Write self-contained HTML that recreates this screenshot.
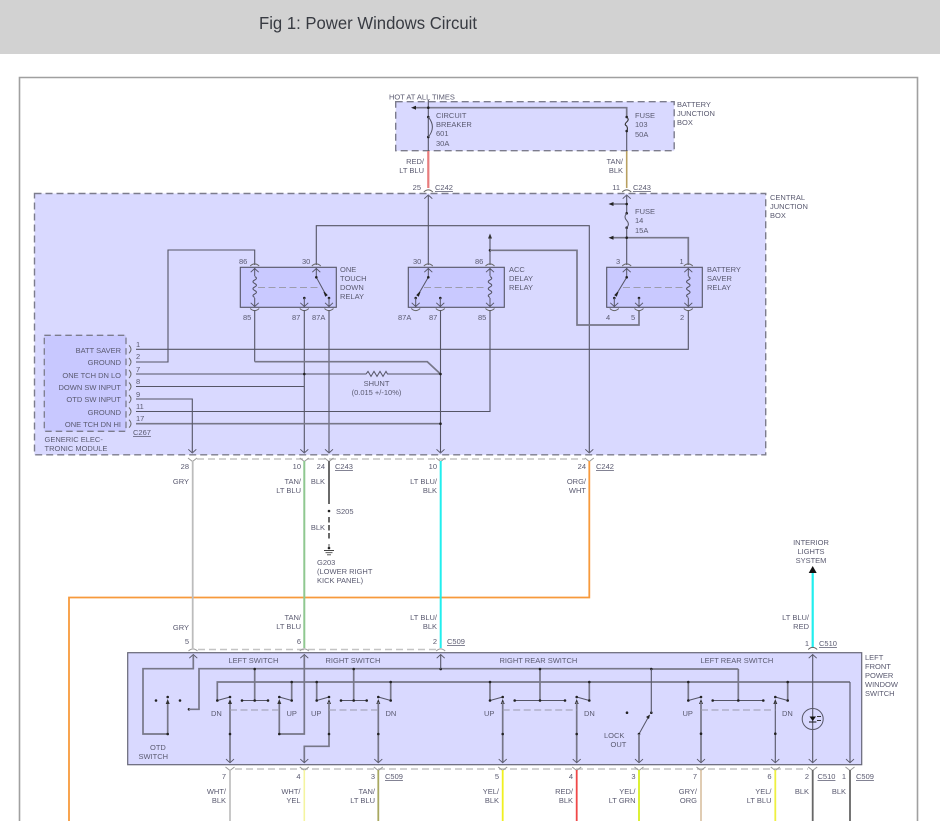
<!DOCTYPE html>
<html><head><meta charset="utf-8"><style>
html,body{margin:0;padding:0;background:#fff;width:940px;height:826px;overflow:hidden}
svg{display:block;position:absolute;left:0;top:0}
text{font-family:"Liberation Sans",Arial,sans-serif;font-size:7.5px;fill:#5a5a70}
.e{text-anchor:end}.m{text-anchor:middle}
.u{text-decoration:underline}
.w{fill:none;stroke:#555566;stroke-width:1.1}
.b{fill:none;stroke:#777788;stroke-width:1.7}
.t{fill:none;stroke:#555566;stroke-width:1}
.ds{fill:none;stroke:#c4c4c4;stroke-width:1.4;stroke-dasharray:7 4}
.ld{fill:none;stroke:#9c9cac;stroke-width:1.1;stroke-dasharray:7 3.5}
.soft{filter:blur(.22px)}
</style></head><body>
<svg width="940" height="826" viewBox="0 0 940 826" xmlns="http://www.w3.org/2000/svg">
<defs>
<g id="d"><circle r="1.3" fill="#222"/></g>
<g id="up"><path d="M-4 3.2 L0 -0.5 L4 3.2" fill="none" stroke="#555566" stroke-width="0.9"/></g>
<g id="dn"><path d="M-4 -3.2 L0 0.5 L4 -3.2" fill="none" stroke="#555566" stroke-width="0.9"/></g>
<g id="at"><path d="M-4.5 2 Q0 -2.2 4.5 2" fill="none" stroke="#666" stroke-width="0.9"/></g>
<g id="ab"><path d="M-4.5 -2 Q0 2.2 4.5 -2" fill="none" stroke="#666" stroke-width="0.9"/></g>
<g id="vg"><path d="M-4.5 -2 L0 1.5 L4.5 -2" fill="none" stroke="#999" stroke-width="1"/></g>
<g id="ag"><path d="M-4.5 2 Q0 -2.2 4.5 2" fill="none" stroke="#999" stroke-width="1"/></g>
<g id="tu"><path d="M0 -3 L2 2 L-2 2 Z" fill="#333"/></g>
<g id="tl"><path d="M-3 0 L2 -2 L2 2 Z" fill="#222"/></g>
<g id="coil"><path d="M0 -10.5 q3.5 1.75 0 3.5 q-3.5 1.75 0 3.5 q3.5 1.75 0 3.5 q-3.5 1.75 0 3.5 q3.5 1.75 0 3.5 q-3.5 1.75 0 3.5" fill="none" stroke="#555566" stroke-width="1"/></g>
</defs>

<rect x="0" y="0" width="940" height="54" fill="#d2d2d2"/>
<text x="259" y="29" style="font-size:17.2px;fill:#383b42" textLength="218" lengthAdjust="spacingAndGlyphs">Fig 1: Power Windows Circuit</text>

<path d="M19.5 821V77.5H917.5V821" fill="none" stroke="#a0a0a0" stroke-width="1.6"/>

<g class="soft">
<rect x="395.7" y="101.7" width="278.5" height="49" fill="#d9d9ff" stroke="#7c7c8c" stroke-width="1.4" stroke-dasharray="7 4"/>
<rect x="34.5" y="193.5" width="731.2" height="261.3" fill="#d9d9ff" stroke="#7c7c8c" stroke-width="1.4" stroke-dasharray="7 4"/>
<rect x="44.3" y="335.3" width="81.7" height="96" fill="#c8c8ff" stroke="#7c7c8c" stroke-width="1.3" stroke-dasharray="6.5 4"/>

<!-- battery junction -->
<path class="w" d="M428.3 100V151"/>
<path class="b" d="M415 107.7H626.7V117"/>
<path class="w" d="M626.7 131V151"/>
<use href="#tl" x="414" y="107.7"/>
<use href="#d" x="428.3" y="107.7"/>
<use href="#d" x="428.3" y="117"/><use href="#d" x="428.3" y="137"/>
<path class="t" d="M428.3 117Q436.5 127 428.3 137"/>
<use href="#d" x="626.7" y="117"/><use href="#d" x="626.7" y="131"/>
<path d="M626.7 117q3 2.5 0 5t0 4q1.5 3 0 5" fill="none" stroke="#333" stroke-width="1.1"/>
<path d="M428.3 151V188" stroke="#e87c7c" stroke-width="2.2"/>
<path d="M626.7 151V188" stroke="#b8a060" stroke-width="1.6"/>
<use href="#at" x="428.3" y="190"/><use href="#at" x="626.7" y="190"/>
<use href="#up" x="428.3" y="195.5"/><use href="#up" x="626.7" y="195.5"/>

<!-- central internals -->
<path class="w" d="M428.3 196V265"/>
<path class="w" d="M316.3 265V225.7H589.3V452"/>
<path class="w" d="M626.7 196V213.3"/>
<path class="w" d="M613 204H626.7"/>
<use href="#tl" x="611.5" y="204"/><use href="#d" x="626.7" y="204"/>
<use href="#d" x="626.7" y="213.3"/><use href="#d" x="626.7" y="227.7"/>
<path class="t" d="M626.7 213.3q-3.4 3.6 0 7.2t0 7.2"/>
<path class="w" d="M626.7 227.7V265"/>
<path class="b" d="M613 237.7H688.3V265"/>
<use href="#tl" x="611.5" y="237.7"/><use href="#d" x="626.7" y="237.7"/>
<path class="w" d="M254.7 265V250H168V362H136"/>
<path class="w" d="M490 238V265"/>
<use href="#tu" x="490" y="236.5"/>
<use href="#d" x="490" y="250.3"/>
<path class="b" d="M490 250.3H577V325H639V310"/>
<path class="w" d="M688.3 310V349.3H136"/>

<!-- relays -->
<rect x="240.3" y="267.3" width="96" height="40" fill="#c9c9ff" stroke="#555566" stroke-width="1.1"/>
<rect x="408.3" y="267.3" width="96" height="40" fill="#c9c9ff" stroke="#555566" stroke-width="1.1"/>
<rect x="606.7" y="267.3" width="95.6" height="40" fill="#c9c9ff" stroke="#555566" stroke-width="1.1"/>

<!-- One touch -->
<path class="ld" d="M258 287.5H320"/>
<path class="t" d="M254.7 268V276M254.7 298V306"/>
<use href="#coil" x="254.7" y="287"/>
<use href="#up" x="254.7" y="269"/><use href="#dn" x="254.7" y="306"/>
<path class="t" d="M316.3 268V277.3L326 295"/>
<use href="#up" x="316.3" y="269"/><use href="#d" x="316.3" y="277.3"/>
<path d="M324 292L327 295L325.5 296Z" fill="#222" stroke="#222"/>
<use href="#d" x="329" y="298"/><path class="t" d="M329 298V307"/><use href="#dn" x="329" y="306"/>
<use href="#d" x="304.3" y="298"/><path class="t" d="M304.3 298V307"/><use href="#dn" x="304.3" y="306"/>
<use href="#at" x="254.7" y="264"/><use href="#at" x="316.3" y="264"/>
<use href="#ab" x="254.7" y="310.5"/><use href="#ab" x="304.3" y="310.5"/><use href="#ab" x="329" y="310.5"/>

<!-- ACC -->
<path class="ld" d="M424 287.5H486"/>
<path class="t" d="M490 268V276M490 298V306"/>
<use href="#coil" x="490" y="287"/>
<use href="#up" x="490" y="269"/><use href="#dn" x="490" y="306"/>
<path class="t" d="M428.3 268V277.3L418 295"/>
<use href="#up" x="428.3" y="269"/><use href="#d" x="428.3" y="277.3"/>
<path d="M420 292L417 295L418.5 296Z" fill="#222" stroke="#222"/>
<use href="#d" x="415.7" y="298"/><path class="t" d="M415.7 298V307"/><use href="#dn" x="415.7" y="306"/>
<use href="#d" x="440.3" y="298"/><path class="t" d="M440.3 298V307"/><use href="#dn" x="440.3" y="306"/>
<use href="#at" x="428.3" y="264"/><use href="#at" x="490" y="264"/>
<use href="#ab" x="415.7" y="310.5"/><use href="#ab" x="440.3" y="310.5"/><use href="#ab" x="490" y="310.5"/>

<!-- Battery saver -->
<path class="ld" d="M623 287.5H685"/>
<path class="t" d="M688.3 268V276M688.3 298V306"/>
<use href="#coil" x="688.3" y="287"/>
<use href="#up" x="688.3" y="269"/><use href="#dn" x="688.3" y="306"/>
<path class="t" d="M626.7 268V277.3L616 295"/>
<use href="#up" x="626.7" y="269"/><use href="#d" x="626.7" y="277.3"/>
<path d="M618 292L615 295L616.5 296Z" fill="#222" stroke="#222"/>
<use href="#d" x="614.3" y="298"/><path class="t" d="M614.3 298V307"/><use href="#dn" x="614.3" y="306"/>
<use href="#d" x="639" y="298"/><path class="t" d="M639 298V307"/><use href="#dn" x="639" y="306"/>
<use href="#at" x="626.7" y="264"/><use href="#at" x="688.3" y="264"/>
<use href="#ab" x="614.3" y="310.5"/><use href="#ab" x="639" y="310.5"/><use href="#ab" x="688.3" y="310.5"/>

<!-- central lower wires -->
<path class="w" d="M304.3 310V452"/>
<path class="w" d="M329 310V452"/>
<path class="w" d="M440.5 310V452"/>
<path class="w" d="M490 310V411.5H136"/>
<path class="w" d="M254.7 310V361.7"/>
<path class="b" d="M254.7 361.7H427.3L440.5 374"/>
<path class="t" d="M136 374H366l2-2.6 3 5 3-5 3 5 3-5 3 5 3-5 1.5 2.6H440.5"/>
<path class="b" d="M136 423.7H440.5"/>
<path class="w" d="M136 386.5H304.3"/>
<path class="w" d="M136 399H192.3V452"/>
<use href="#d" x="304.3" y="374"/><use href="#d" x="440.5" y="374"/><use href="#d" x="440.5" y="423.7"/>
<use href="#dn" x="192.3" y="452.5"/><use href="#dn" x="304.3" y="452.5"/><use href="#dn" x="329" y="452.5"/><use href="#dn" x="440.5" y="452.5"/><use href="#dn" x="589.3" y="452.5"/>
<g fill="none" stroke="#666" stroke-width="0.9">
<path d="M129 345.3Q133 349.3 129 353.3M129 358Q133 362 129 366M129 370Q133 374 129 378M129 382.5Q133 386.5 129 390.5M129 395Q133 399 129 403M129 407.5Q133 411.5 129 415.5M129 419.7Q133 423.7 129 427.7"/>
</g>

<!-- between boxes -->
<path class="ds" d="M197 459H585"/>
<use href="#vg" x="192.5" y="460"/><use href="#vg" x="304.3" y="460"/><use href="#vg" x="329" y="460"/><use href="#vg" x="440.7" y="460"/><use href="#vg" x="589.3" y="460"/>
<path d="M589.3 461V597.5H69V821" fill="none" stroke="#f79a3c" stroke-width="1.8"/>
<path d="M192.7 461V648" stroke="#bcbcbc" stroke-width="1.8"/>
<path d="M304.3 461V648" stroke="#8fc890" stroke-width="2"/>
<path d="M440.7 461V648" stroke="#22eeee" stroke-width="2"/>
<path d="M329 461V504" stroke="#6a6a6a" stroke-width="2"/>
<path d="M329 517V541" stroke="#6a6a6a" stroke-width="2" stroke-dasharray="5.5 2.5"/>
<use href="#d" x="329" y="511"/><use href="#d" x="329" y="548"/>
<path d="M329 544V548M324 550.5H334M325.5 552.7H332.5M327 554.8H331" stroke="#444" stroke-width="0.9" fill="none"/>
<path class="ds" d="M198 649.5H436"/>
<use href="#ag" x="193" y="649"/><use href="#ag" x="304.3" y="649"/><use href="#ag" x="440.7" y="649"/>
<path d="M812.7 572V648" stroke="#22eeee" stroke-width="2.2"/>
<path d="M812.7 566L816.7 573H808.7Z" fill="#111"/>
<use href="#at" x="812.7" y="647.5"/>

<!-- Lower module -->
<rect x="127.7" y="652.7" width="734" height="112" fill="#d9d9ff" stroke="#666677" stroke-width="1.2"/>
<use href="#up" x="193.3" y="655"/><use href="#up" x="304.3" y="655"/><use href="#up" x="440.7" y="655"/><use href="#up" x="812.7" y="655"/>
<path class="b" d="M193.3 655V668.7H143V734H167.7V702"/>
<use href="#d" x="167.7" y="734"/>
<use href="#tu" x="167.7" y="702"/><use href="#d" x="167.7" y="697"/>
<use href="#d" x="156" y="700.5"/><use href="#d" x="180" y="700.5"/>
<use href="#d" x="189" y="709.3"/>
<path class="b" d="M189 709.3H199V668.7H651.3"/>
<path class="b" d="M651.3 669H738.3"/>
<use href="#d" x="651.3" y="669"/><use href="#d" x="440.7" y="669"/>
<path class="w" d="M440.7 655V669"/>
<path class="b" d="M217.3 700.5V682H850"/>
<path class="w" d="M850 682V762"/>

<!-- left switch -->
<path class="t" d="M217.3 700.5L230 697"/>
<path class="b" d="M230 702V762"/>
<use href="#d" x="217.3" y="700.5"/><use href="#d" x="230" y="697"/><use href="#tu" x="230" y="702"/><use href="#d" x="230" y="734"/>
<path class="t" d="M242 700.5H268"/><path class="b" d="M254.7 700.5V669"/>
<use href="#d" x="242" y="700.5"/><use href="#d" x="254.7" y="700.5"/><use href="#d" x="268" y="700.5"/><use href="#d" x="254.7" y="669"/>
<path class="t" d="M279.3 697L291.7 700.5"/><path class="b" d="M291.7 700.5V682"/>
<use href="#d" x="279.3" y="697"/><use href="#d" x="291.7" y="700.5"/><use href="#d" x="291.7" y="682"/>
<path class="b" d="M279.3 702V734H304.3V655"/>
<use href="#tu" x="279.3" y="702"/><use href="#d" x="279.3" y="734"/>
<path class="ld" d="M230 710H279.3"/>

<!-- right switch -->
<path class="b" d="M316.7 682V700.5"/><path class="t" d="M316.7 700.5L329 697"/>
<use href="#d" x="316.7" y="682"/><use href="#d" x="316.7" y="700.5"/><use href="#d" x="329" y="697"/><use href="#tu" x="329" y="702"/>
<path class="b" d="M329 702V746.3H304.3V762"/><use href="#d" x="329" y="734"/>
<path class="t" d="M341 700.5H366.7"/><path class="b" d="M353.7 700.5V669"/>
<use href="#d" x="341" y="700.5"/><use href="#d" x="353.7" y="700.5"/><use href="#d" x="366.7" y="700.5"/><use href="#d" x="353.7" y="669"/>
<path class="t" d="M378.3 697L390.7 700.5"/><path class="b" d="M390.7 700.5V682"/>
<use href="#d" x="378.3" y="697"/><use href="#d" x="390.7" y="700.5"/><use href="#d" x="390.7" y="682"/><use href="#tu" x="378.3" y="702"/>
<path class="b" d="M378.3 702V762"/><use href="#d" x="378.3" y="734"/>
<path class="ld" d="M329 710H378.3"/>

<!-- right rear -->
<path class="b" d="M490 682V700.5"/><path class="t" d="M490 700.5L502.7 697"/>
<use href="#d" x="490" y="682"/><use href="#d" x="490" y="700.5"/><use href="#d" x="502.7" y="697"/><use href="#tu" x="502.7" y="702"/>
<path class="b" d="M502.7 702V762"/><use href="#d" x="502.7" y="734"/>
<path class="t" d="M514.7 700.5H565"/><path class="b" d="M540 700.5V669"/>
<use href="#d" x="514.7" y="700.5"/><use href="#d" x="540" y="700.5"/><use href="#d" x="565" y="700.5"/><use href="#d" x="540" y="669"/>
<path class="t" d="M576.7 697L589.3 700.5"/><path class="b" d="M589.3 700.5V682"/>
<use href="#d" x="576.7" y="697"/><use href="#d" x="589.3" y="700.5"/><use href="#d" x="589.3" y="682"/><use href="#tu" x="576.7" y="702"/>
<path class="b" d="M576.7 702V762"/><use href="#d" x="576.7" y="734"/>
<path class="ld" d="M502.7 710H576.7"/>

<!-- lock -->
<use href="#d" x="627" y="712.7"/><use href="#d" x="651.3" y="712.7"/>
<path class="w" d="M651.3 712.7V669"/>
<path class="t" d="M639 734L649 716"/><path d="M650 714.5L649 719L646 717Z" fill="#222"/>
<use href="#d" x="639" y="734"/><path class="b" d="M639 734V762"/>

<!-- left rear -->
<path class="b" d="M688.3 682V700.5"/><path class="t" d="M688.3 700.5L701 697"/>
<use href="#d" x="688.3" y="682"/><use href="#d" x="688.3" y="700.5"/><use href="#d" x="701" y="697"/><use href="#tu" x="701" y="702"/>
<path class="b" d="M701 702V762"/><use href="#d" x="701" y="733.7"/>
<path class="t" d="M712.7 700.5H763.3"/><path class="b" d="M738.3 700.5V669"/>
<use href="#d" x="712.7" y="700.5"/><use href="#d" x="738.3" y="700.5"/><use href="#d" x="763.3" y="700.5"/>
<path class="t" d="M775.3 697L787.7 700.5"/><path class="b" d="M787.7 700.5V682"/>
<use href="#d" x="775.3" y="697"/><use href="#d" x="787.7" y="700.5"/><use href="#d" x="787.7" y="682"/><use href="#tu" x="775.3" y="702"/>
<path class="w" d="M775.3 702V762"/><use href="#d" x="775.3" y="733.7"/>
<path class="ld" d="M701 710H775.3"/>

<!-- LED -->
<path class="w" d="M812.7 655V762"/>
<circle cx="812.7" cy="719" r="10.5" fill="none" stroke="#555566" stroke-width="1"/>
<path d="M809.5 716.5H816L812.7 721Z" fill="#111"/><path d="M809 722H816.4" stroke="#111" stroke-width="1"/>
<path d="M817 716.5H821M817 720.5H821" stroke="#333" stroke-width="1.1"/>

<!-- bottom arrows -->
<g>
<use href="#dn" x="230" y="762.3"/><use href="#dn" x="304.3" y="762.3"/><use href="#dn" x="378.3" y="762.3"/><use href="#dn" x="502.7" y="762.3"/><use href="#dn" x="576.7" y="762.3"/><use href="#dn" x="639" y="762.3"/><use href="#dn" x="701" y="762.3"/><use href="#dn" x="775.3" y="762.3"/><use href="#dn" x="812.7" y="762.3"/><use href="#dn" x="850" y="762.3"/>
</g>
<path class="ds" d="M235 769H808"/>
<g>
<use href="#vg" x="230" y="769"/><use href="#vg" x="304.3" y="769"/><use href="#vg" x="378.3" y="769"/><use href="#vg" x="502.7" y="769"/><use href="#vg" x="576.7" y="769"/><use href="#vg" x="639" y="769"/><use href="#vg" x="701" y="769"/><use href="#vg" x="775.3" y="769"/><use href="#vg" x="812.7" y="769"/><use href="#vg" x="850" y="769"/>
</g>
<path d="M230 770V821" stroke="#bbb" stroke-width="1.6"/>
<path d="M304.3 770V821" stroke="#f4f4a0" stroke-width="1.6"/>
<path d="M378.3 770V821" stroke="#a8a860" stroke-width="1.8"/>
<path d="M502.7 770V821" stroke="#f0f020" stroke-width="1.8"/>
<path d="M576.7 770V821" stroke="#f04848" stroke-width="1.8"/>
<path d="M639 770V821" stroke="#d8ee20" stroke-width="1.8"/>
<path d="M701 770V821" stroke="#d8c0a0" stroke-width="1.6"/>
<path d="M775.3 770V821" stroke="#eef040" stroke-width="1.8"/>
<path d="M812.7 770V821" stroke="#666" stroke-width="1.8"/>
<path d="M850 770V821" stroke="#666" stroke-width="1.8"/>

<!-- TEXT -->
<text x="389" y="99.5">HOT AT ALL TIMES</text>
<text x="436" y="118">CIRCUIT</text><text x="436" y="127">BREAKER</text><text x="436" y="136">601</text><text x="436" y="146">30A</text>
<text x="635" y="118">FUSE</text><text x="635" y="127">103</text><text x="635" y="137">50A</text>
<text x="677" y="107">BATTERY</text><text x="677" y="116">JUNCTION</text><text x="677" y="125">BOX</text>
<text class="e" x="424" y="164">RED/</text><text class="e" x="424" y="173">LT BLU</text>
<text class="e" x="623" y="164">TAN/</text><text class="e" x="623" y="173">BLK</text>
<text class="e" x="421" y="190">25</text><text class="u" x="435" y="190">C242</text>
<text class="e" x="620" y="190">11</text><text class="u" x="633" y="190">C243</text>
<text x="770" y="200">CENTRAL</text><text x="770" y="209">JUNCTION</text><text x="770" y="218">BOX</text>
<text x="635" y="214">FUSE</text><text x="635" y="223">14</text><text x="635" y="233">15A</text>

<text x="239" y="264">86</text><text x="302" y="264">30</text><text x="413" y="264">30</text><text x="475" y="264">86</text>
<text x="616" y="264">3</text><text x="679.5" y="264">1</text>
<text x="243" y="320">85</text><text x="292" y="320">87</text><text x="312" y="320">87A</text>
<text x="398" y="320">87A</text><text x="429" y="320">87</text><text x="478" y="320">85</text>
<text x="606" y="320">4</text><text x="631" y="320">5</text><text x="680" y="320">2</text>
<text x="340" y="272">ONE</text><text x="340" y="281">TOUCH</text><text x="340" y="290">DOWN</text><text x="340" y="299">RELAY</text>
<text x="509" y="272">ACC</text><text x="509" y="281">DELAY</text><text x="509" y="290">RELAY</text>
<text x="707" y="272">BATTERY</text><text x="707" y="281">SAVER</text><text x="707" y="290">RELAY</text>

<text class="e" x="121" y="353">BATT SAVER</text><text class="e" x="121" y="365">GROUND</text><text class="e" x="121" y="378">ONE TCH DN LO</text><text class="e" x="121" y="390">DOWN SW INPUT</text><text class="e" x="121" y="402">OTD SW INPUT</text><text class="e" x="121" y="415">GROUND</text><text class="e" x="121" y="427">ONE TCH DN HI</text>
<text x="136" y="347">1</text><text x="136" y="359">2</text><text x="136" y="372">7</text><text x="136" y="384">8</text><text x="136" y="397">9</text><text x="136" y="409">11</text><text x="136" y="421">17</text>
<text class="u" x="133" y="435">C267</text>
<text x="44.5" y="442">GENERIC ELEC-</text><text x="44.5" y="451">TRONIC MODULE</text>
<text class="m" x="376.5" y="386">SHUNT</text><text class="m" x="376.5" y="395">(0.015 +/-10%)</text>

<text class="e" x="189" y="469">28</text><text class="e" x="189" y="484">GRY</text>
<text class="e" x="301" y="469">10</text><text class="e" x="301" y="484">TAN/</text><text class="e" x="301" y="493">LT BLU</text>
<text class="e" x="325" y="469">24</text><text class="e" x="325" y="484">BLK</text><text class="u" x="335" y="469">C243</text>
<text x="336" y="514">S205</text><text class="e" x="325" y="530">BLK</text>
<text x="317" y="565">G203</text><text x="317" y="574">(LOWER RIGHT</text><text x="317" y="583">KICK PANEL)</text>
<text class="e" x="437" y="469">10</text><text class="e" x="437" y="484">LT BLU/</text><text class="e" x="437" y="493">BLK</text>
<text class="e" x="586" y="469">24</text><text class="e" x="586" y="484">ORG/</text><text class="e" x="586" y="493">WHT</text><text class="u" x="596" y="469">C242</text>

<text class="e" x="189" y="630">GRY</text><text class="e" x="189" y="644">5</text>
<text class="e" x="301" y="620">TAN/</text><text class="e" x="301" y="629">LT BLU</text><text class="e" x="301" y="644">6</text>
<text class="e" x="437" y="620">LT BLU/</text><text class="e" x="437" y="629">BLK</text><text class="e" x="437" y="644">2</text><text class="u" x="447" y="644">C509</text>
<text class="m" x="811" y="545">INTERIOR</text><text class="m" x="811" y="554">LIGHTS</text><text class="m" x="811" y="563">SYSTEM</text>
<text class="e" x="809" y="620">LT BLU/</text><text class="e" x="809" y="629">RED</text><text class="e" x="809" y="646">1</text><text class="u" x="819" y="646">C510</text>
<text x="865" y="660">LEFT</text><text x="865" y="669">FRONT</text><text x="865" y="678">POWER</text><text x="865" y="687">WINDOW</text><text x="865" y="696">SWITCH</text>

<text x="228.5" y="663">LEFT SWITCH</text><text x="325.5" y="663">RIGHT SWITCH</text><text x="499.5" y="663">RIGHT REAR SWITCH</text><text x="700.5" y="663">LEFT REAR SWITCH</text>
<text x="211" y="716">DN</text><text x="286.5" y="716">UP</text><text x="311" y="716">UP</text><text x="385.5" y="716">DN</text>
<text x="484" y="716">UP</text><text x="584" y="716">DN</text><text x="682.5" y="716">UP</text><text x="782" y="716">DN</text>
<text x="604" y="738">LOCK</text><text x="610.5" y="747">OUT</text>
<text x="150" y="750">OTD</text><text x="138.5" y="759">SWITCH</text>

<text class="e" x="226" y="779">7</text><text class="e" x="226" y="794">WHT/</text><text class="e" x="226" y="803">BLK</text>
<text class="e" x="300.5" y="779">4</text><text class="e" x="300.5" y="794">WHT/</text><text class="e" x="300.5" y="803">YEL</text>
<text class="e" x="375" y="779">3</text><text class="e" x="375" y="794">TAN/</text><text class="e" x="375" y="803">LT BLU</text><text class="u" x="385" y="779">C509</text>
<text class="e" x="499" y="779">5</text><text class="e" x="499" y="794">YEL/</text><text class="e" x="499" y="803">BLK</text>
<text class="e" x="573" y="779">4</text><text class="e" x="573" y="794">RED/</text><text class="e" x="573" y="803">BLK</text>
<text class="e" x="635.5" y="779">3</text><text class="e" x="635.5" y="794">YEL/</text><text class="e" x="635.5" y="803">LT GRN</text>
<text class="e" x="697" y="779">7</text><text class="e" x="697" y="794">GRY/</text><text class="e" x="697" y="803">ORG</text>
<text class="e" x="771.5" y="779">6</text><text class="e" x="771.5" y="794">YEL/</text><text class="e" x="771.5" y="803">LT BLU</text>
<text class="e" x="809" y="779">2</text><text class="e" x="809" y="794">BLK</text><text class="u" x="817.5" y="779">C510</text>
<text class="e" x="846" y="779">1</text><text class="e" x="846" y="794">BLK</text><text class="u" x="856" y="779">C509</text>
</g>
</svg>
</body></html>
